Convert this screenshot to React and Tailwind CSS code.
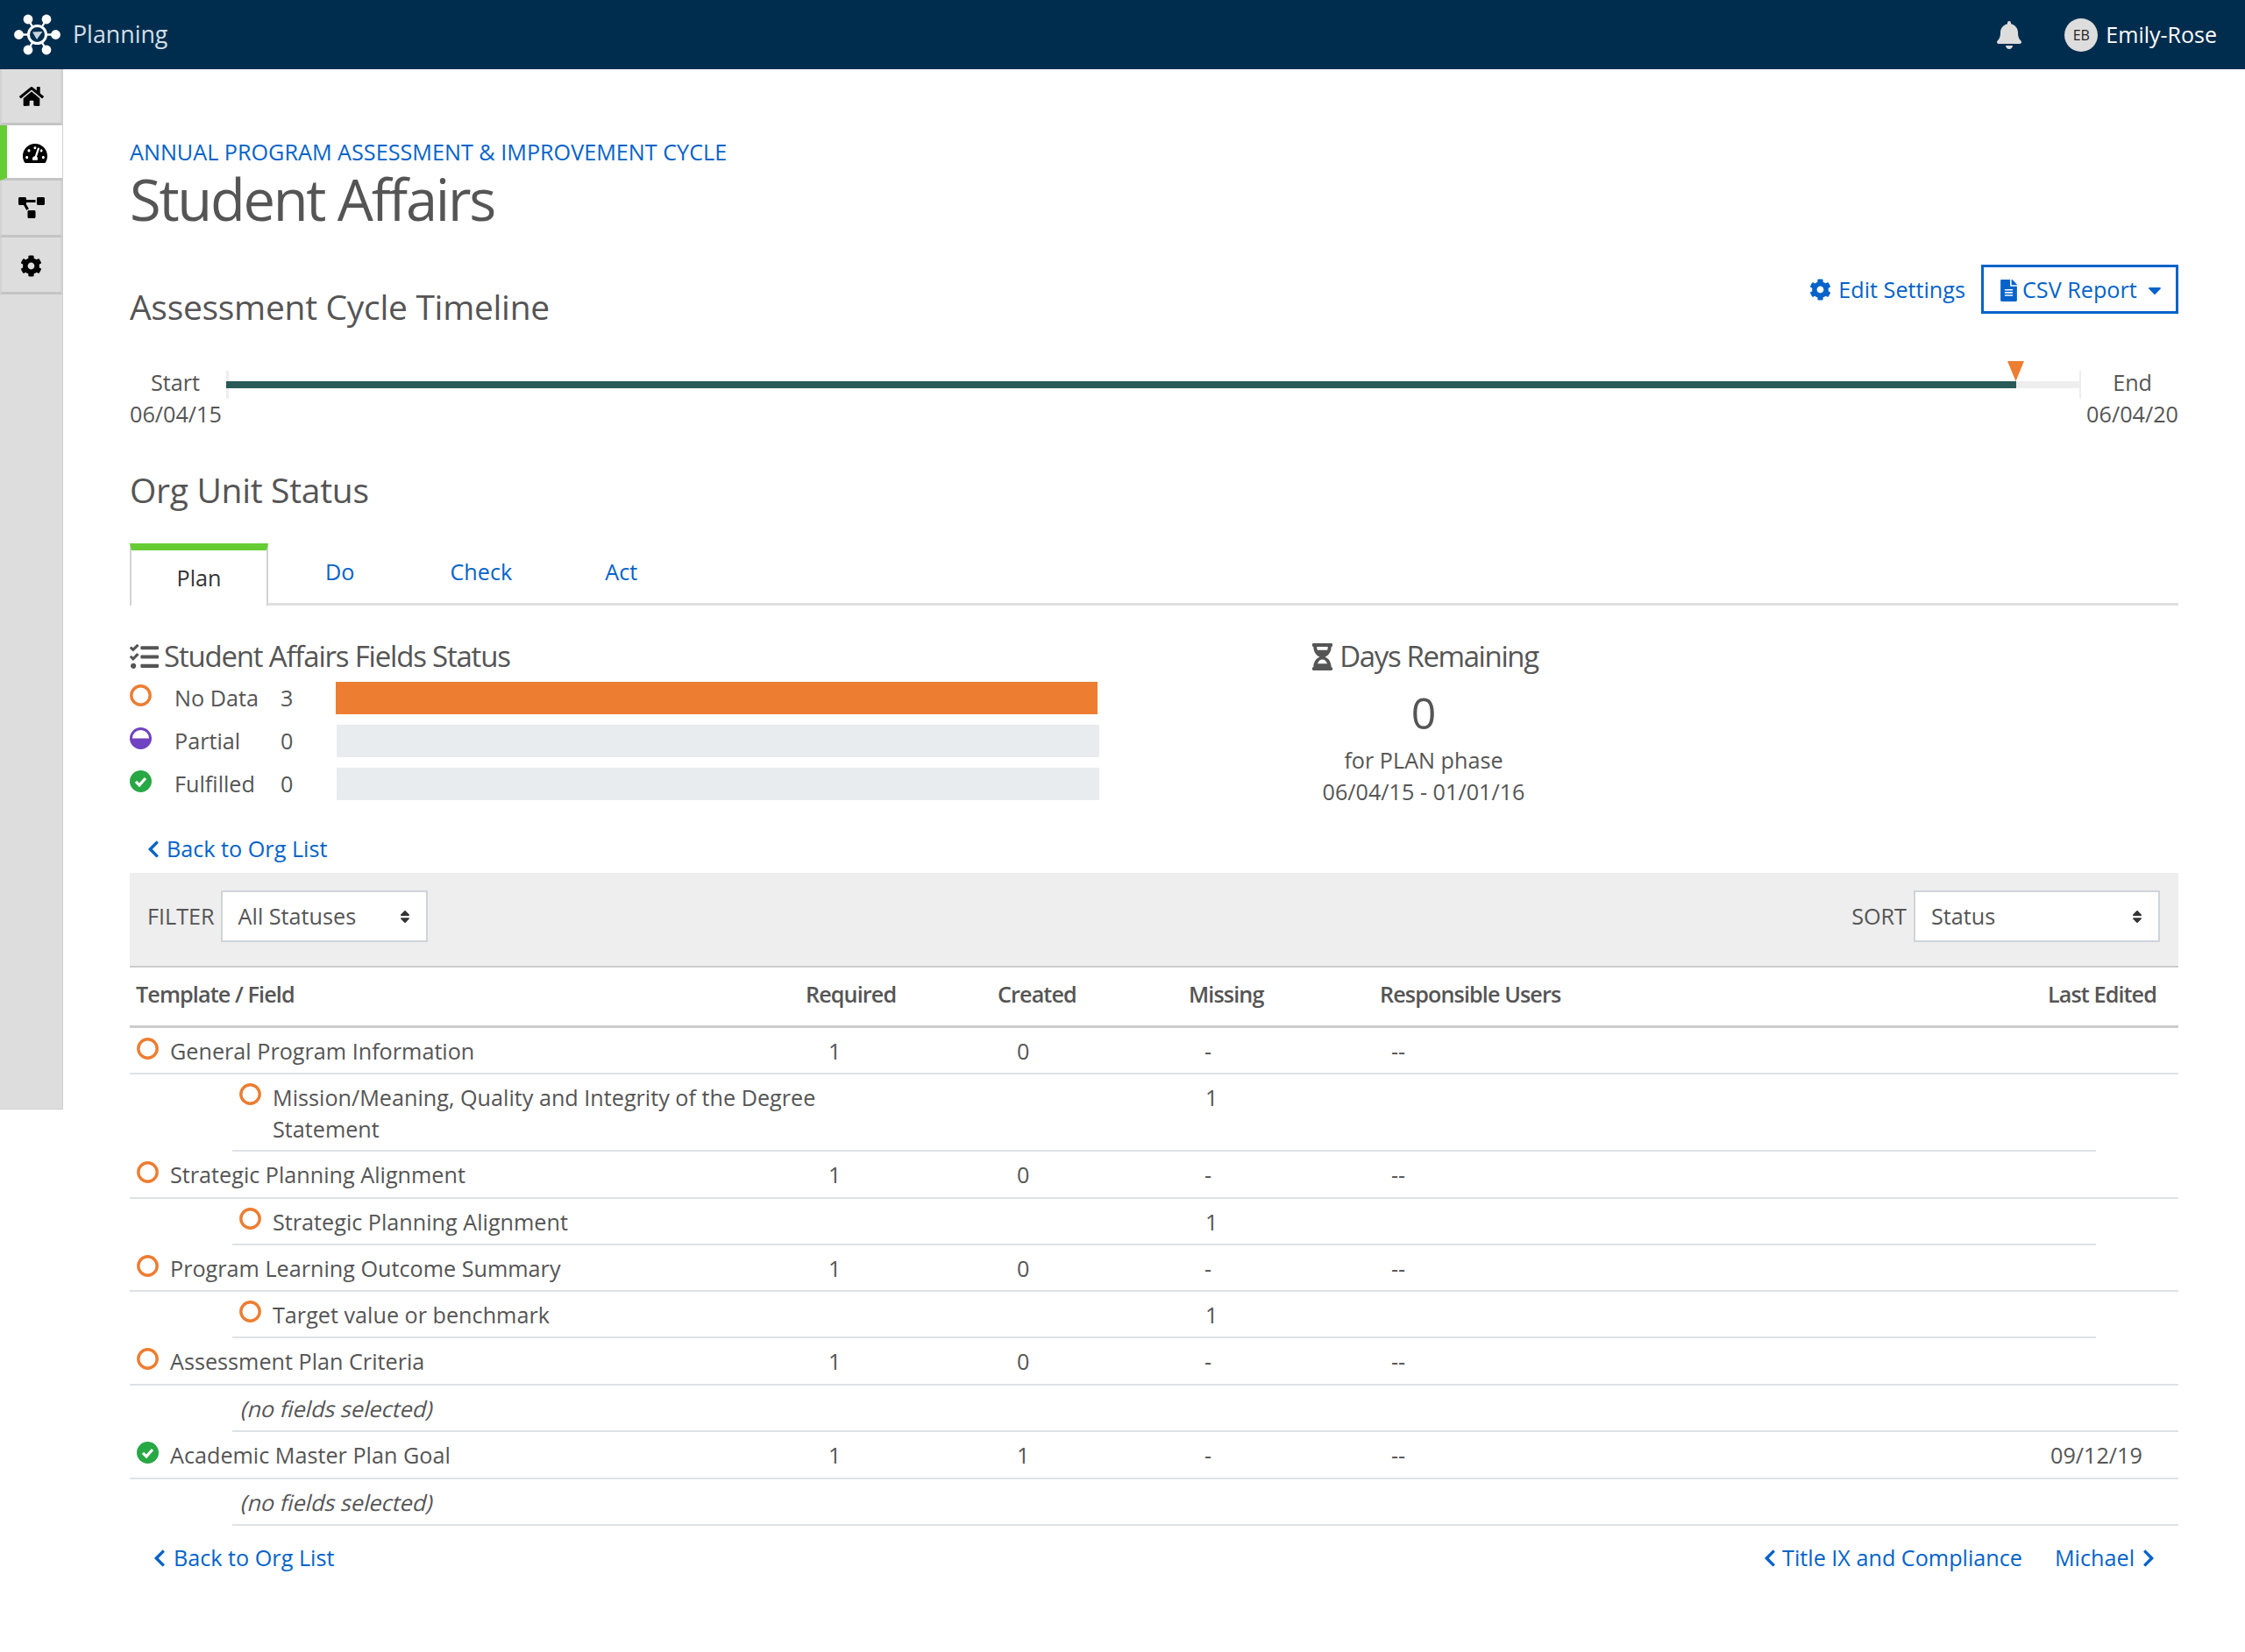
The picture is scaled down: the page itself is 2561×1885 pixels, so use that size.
import React from "react";
import { FaHome, FaTachometerAlt, FaProjectDiagram, FaCog, FaBell, FaFileAlt, FaTasks, FaHourglassHalf, FaChevronLeft, FaChevronRight, FaCaretDown, FaSort } from "react-icons/fa";

function Logo() {
  return (
    <svg width="53" height="47" viewBox="0 0 53 47" fill="#fff" stroke="#fff">
      <g strokeWidth="2.4">
        <line x1="26.5" y1="23.5" x2="16" y2="6" />
        <line x1="26.5" y1="23.5" x2="37" y2="6" />
        <line x1="26.5" y1="23.5" x2="5.5" y2="23.5" />
        <line x1="26.5" y1="23.5" x2="47.5" y2="23.5" />
        <line x1="26.5" y1="23.5" x2="16" y2="41" />
        <line x1="26.5" y1="23.5" x2="37" y2="41" />
      </g>
      <g stroke="none">
        <circle cx="16" cy="6" r="5.4" />
        <circle cx="37" cy="6" r="5.4" />
        <circle cx="5.5" cy="23.5" r="5.4" />
        <circle cx="47.5" cy="23.5" r="5.4" />
        <circle cx="16" cy="41" r="5.4" />
        <circle cx="37" cy="41" r="5.4" />
      </g>
      <circle cx="26.5" cy="23.5" r="10" fill="#002d4e" strokeWidth="3" />
      <path d="M21 20.5 L32.5 20 L26 29 Z" fill="#c9d6df" stroke="none" />
    </svg>
  );
}

function StatusIcon({ kind, className = "" }) {
  if (kind === "empty") {
    return (
      <svg width="25" height="25" viewBox="0 0 25 25" className={className}>
        <circle cx="12.5" cy="12.5" r="10.7" fill="none" stroke="#ed7d31" strokeWidth="3.4" />
      </svg>
    );
  }
  if (kind === "partial") {
    return (
      <svg width="25" height="25" viewBox="0 0 25 25" className={className}>
        <circle cx="12.5" cy="12.5" r="11" fill="#fff" stroke="#6f42c1" strokeWidth="3" />
        <path d="M1.5 12.5 A11 11 0 0 0 23.5 12.5 Z" fill="#6f42c1" />
      </svg>
    );
  }
  return (
    <svg width="25" height="25" viewBox="0 0 25 25" className={className}>
      <circle cx="12.5" cy="12.5" r="12.5" fill="#28a745" />
      <path d="M7 12.8 L11 16.8 L18 9" fill="none" stroke="#fff" strokeWidth="3.2" />
    </svg>
  );
}

function NavItem({ icon, active, h, iconClass }) {
  return (
    <div
      className={
        active
          ? "flex items-center justify-center border-l-[8px] border-b-[3px] border-l-[#66cc33] border-b-[#c4c4c4] bg-white text-black"
          : "flex items-center justify-center border-x-2 border-b-[3px] border-x-[#d2d2d2] border-b-[#c4c4c4] text-black"
      }
      style={{ height: h }}
    >
      <span className={iconClass}>{icon}</span>
    </div>
  );
}

function Select({ label, w }) {
  return (
    <div className={`flex h-[59px] items-center justify-between border-2 border-[#ced4da] bg-white pl-[18px] pr-[15px] ${w}`}>
      <span className="text-[25.2px] text-[#555]">{label}</span>
      <FaSort className="text-[18px] text-[#333]" />
    </div>
  );
}

function TemplateRow({ name, req, created, icon = "empty", date }) {
  return (
    <div className="grid h-[53.5px] grid-cols-[771px_219px_218px_218px_1fr_146px] items-center border-b-2 border-[#dee2e6] pt-[3px] text-[25.2px] text-[#555]">
      <div className="flex items-center pl-[8px]">
        <StatusIcon kind={icon} className="-mt-[7px] mr-[13px]" />
        <span>{name}</span>
      </div>
      <div className="pl-[26px]">{req}</div>
      <div className="pl-[22px]">{created}</div>
      <div className="pl-[18px]">-</div>
      <div className="pl-[13px]">--</div>
      <div className="pl-[0px]">{date}</div>
    </div>
  );
}

function FieldRow({ name, wide }) {
  return (
    <div className="ml-[117px] mr-[94px] flex min-h-[53px] items-start border-b-2 border-[#dee2e6] pb-[6px] pt-[8px] text-[25.2px] leading-[36px] text-[#555]">
      <div className="flex w-[1110px] items-start pl-[8px]">
        <StatusIcon kind="empty" className="mr-[13px] mt-[2px] shrink-0" />
        <span className={wide ? "w-[640px]" : ""}>{name}</span>
      </div>
      <div>1</div>
    </div>
  );
}

function EmptyRow() {
  return (
    <div className="ml-[117px] flex h-[53.5px] items-center border-b-2 border-[#dee2e6] pl-[11px] pt-[3px] text-[25.2px] text-[#555]">
      <span className="inline-block -skew-x-[14deg]">(no fields selected)</span>
    </div>
  );
}

export default function App() {
  return (
    <div className="min-h-[1885px] bg-white font-['Open_Sans',sans-serif] text-[#555]">
      <header className="flex h-[79px] items-center justify-between bg-[#002d4e] pl-[16px] pr-[32px]">
        <div className="flex items-center">
          <Logo />
          <span className="ml-[14px] text-[26.8px] text-[#d3dfe7]">Planning</span>
        </div>
        <div className="flex items-center">
          <FaBell className="mr-[47px] text-[32px] text-[#dddddd]" />
          <span className="mr-[9px] flex h-[38px] w-[38px] items-center justify-center rounded-full bg-[#dddddd] text-[16px] font-medium text-[#222]">EB</span>
          <span className="text-[25px] text-white">Emily-Rose</span>
        </div>
      </header>

      <div className="flex">
        <aside className="h-[1187px] w-[72px] shrink-0 border-b border-r border-[#cfcfcf] bg-[#dddddd]">
          <NavItem h={64} icon={<FaHome />} iconClass="text-[28px]" />
          <NavItem h={63} active icon={<FaTachometerAlt />} iconClass="mt-[3px] text-[28px]" />
          <NavItem h={65} icon={<FaProjectDiagram />} iconClass="text-[30px]" />
          <NavItem h={65} icon={<FaCog />} iconClass="mt-[3px] text-[25px]" />
        </aside>

        <main className="flex-1 px-[76px] pt-[76px]">
          <div className="text-[25.2px] leading-[36px] text-[#0563c9]">ANNUAL PROGRAM ASSESSMENT &amp; IMPROVEMENT CYCLE</div>
          <h1 className="h-[78px] text-[65px] leading-[72px] tracking-[-2.25px] text-[#555]">Student Affairs</h1>

          <div className="mt-[33px] flex items-start justify-between">
            <h2 className="mt-[24px] text-[39px] leading-[47px] tracking-[-0.3px] text-[#555]">Assessment Cycle Timeline</h2>
            <div className="flex items-center">
              <span className="mr-[18px] flex items-center pt-[2px] text-[25.2px] text-[#0563c9]">
                <FaCog className="mr-[8px] text-[25px]" />
                Edit Settings
              </span>
              <div className="flex h-[56px] w-[225px] items-center border-[3px] border-[#0563c9] pl-[16px] pt-[2px] text-[25.2px] text-[#0563c9]">
                <FaFileAlt className="mr-[3px] text-[25px]" />
                CSV Report
                <FaCaretDown className="ml-[8px] text-[24px]" />
              </div>
            </div>
          </div>

          <div className="mt-[45px] flex">
            <div className="w-[110px] text-[25.2px] leading-[36px] text-[#555]">
              <div className="pl-[24px]">Start</div>
              <div>06/04/15</div>
            </div>
            <div className="relative mt-[5px] flex h-[32px] flex-1 items-center">
              <div className="absolute left-0 top-0 h-full w-[3px] bg-[#eeeeee]" />
              <div className="absolute right-0 top-0 h-full w-[2px] bg-[#eeeeee]" />
              <div className="relative h-[8px] w-[2042px] bg-[#285a57]" />
              <div className="h-[8px] flex-1 bg-[#eeeeee]" />
              <svg width="19" height="23" viewBox="0 0 19 23" className="absolute left-[2032px] top-[-11px]">
                <path d="M0 0 L19 0 L9.5 23 Z" fill="#ed7d31" />
              </svg>
            </div>
            <div className="w-[111px] text-right text-[25.2px] leading-[36px] text-[#555]">
              <div className="pr-[30px]">End</div>
              <div>06/04/20</div>
            </div>
          </div>

          <h2 className="mt-[45px] text-[39px] leading-[47px] tracking-[-0.3px] text-[#555]">Org Unit Status</h2>

          <div className="mt-[38px] flex h-[71px] border-b-[3px] border-[#e0e0e0]">
            <div className="flex h-[71px] w-[158px] items-center justify-center border-x-2 border-t-[8px] border-x-[#d2d2d2] border-t-[#66cc33] bg-white text-[25.2px] text-[#333]">Plan</div>
            <div className="flex h-[66px] items-center pl-[65px] text-[25.2px] text-[#0563c9]">Do</div>
            <div className="flex h-[66px] items-center pl-[109px] text-[25.2px] text-[#0563c9]">Check</div>
            <div className="flex h-[66px] items-center pl-[106px] text-[25.2px] text-[#0563c9]">Act</div>
          </div>

          <div className="mt-[38px] flex">
            <div className="w-[1106px]">
              <div className="flex h-[40px] items-center text-[33px] tracking-[-1.2px] text-[#555]">
                <FaTasks className="mr-[6px] text-[33px]" />
                Student Affairs Fields Status
              </div>
              <div className="mt-[3px]">
                {[
                  ["empty", "No Data", "3", "mr-[2px] bg-[#ed7d31]"],
                  ["partial", "Partial", "0", "ml-[1px] bg-[#e9ecef]"],
                  ["check", "Fulfilled", "0", "ml-[1px] bg-[#e9ecef]"],
                ].map(([k, l, v, c]) => (
                  <div key={l} className="flex h-[49px] items-center text-[25.2px]">
                    <StatusIcon kind={k} className="-mt-[6px] mr-[26px] shrink-0" />
                    <span className="w-[121px]">{l}</span>
                    <span className="w-[63px]">{v}</span>
                    <div className={`h-[37px] flex-1 ${c}`} />
                  </div>
                ))}
              </div>
            </div>
            <div className="w-[740px] text-center">
              <div className="flex h-[40px] items-center justify-center text-[33px] tracking-[-1.4px] text-[#555]">
                <FaHourglassHalf className="mr-[4px] text-[31px]" />
                Days Remaining
              </div>
              <div className="mt-[10px] text-[50px] leading-[68px]">0</div>
              <div className="mt-[2px] text-[25.2px] leading-[36px]">for PLAN phase</div>
              <div className="text-[25.2px] leading-[36px]">06/04/15 - 01/01/16</div>
            </div>
          </div>

          <div className="mt-[30px] flex h-[36px] items-center pl-[16px] text-[25.2px] text-[#0563c9]">
            <FaChevronLeft className="mr-[4px] text-[22px]" />
            Back to Org List
          </div>

          <div className="mt-[9px] flex h-[108px] items-start justify-between border-b-[2px] border-[#cccccc] bg-[#eeeeee] pl-[20px] pr-[21px] pt-[20px] text-[25.2px]">
            <div className="flex items-center">
              <span className="mr-[7px]">FILTER</span>
              <Select label="All Statuses" w="w-[236px]" />
            </div>
            <div className="flex items-center">
              <span className="mr-[8px]">SORT</span>
              <Select label="Status" w="w-[281px]" />
            </div>
          </div>

          <div className="grid h-[68.5px] grid-cols-[771px_219px_218px_218px_1fr] items-center border-b-[3px] border-[#cccccc] pb-[3px] text-[25.2px] font-semibold tracking-[-0.9px] text-[#555]">
            <div className="pl-[7px]">Template / Field</div>
            <div>Required</div>
            <div>Created</div>
            <div>Missing</div>
            <div className="flex justify-between pr-[25px]"><span>Responsible Users</span><span>Last Edited</span></div>
          </div>

          <TemplateRow name="General Program Information" req="1" created="0" />
          <FieldRow name="Mission/Meaning, Quality and Integrity of the Degree Statement" wide />
          <TemplateRow name="Strategic Planning Alignment" req="1" created="0" />
          <FieldRow name="Strategic Planning Alignment" />
          <TemplateRow name="Program Learning Outcome Summary" req="1" created="0" />
          <FieldRow name="Target value or benchmark" />
          <TemplateRow name="Assessment Plan Criteria" req="1" created="0" />
          <EmptyRow />
          <TemplateRow name="Academic Master Plan Goal" req="1" created="1" icon="check" date="09/12/19" />
          <EmptyRow />

          <div className="mt-[19px] flex h-[36px] items-center justify-between pl-[23px] pr-[23px] text-[25.2px] text-[#0563c9]">
            <span className="flex items-center">
              <FaChevronLeft className="mr-[5px] text-[22px]" />
              Back to Org List
            </span>
            <span className="flex items-center">
              <FaChevronLeft className="mr-[3px] text-[22px]" />
              Title IX and Compliance
              <span className="ml-[37px]">Michael</span>
              <FaChevronRight className="ml-[5px] text-[22px]" />
            </span>
          </div>
        </main>
      </div>
    </div>
  );
}
